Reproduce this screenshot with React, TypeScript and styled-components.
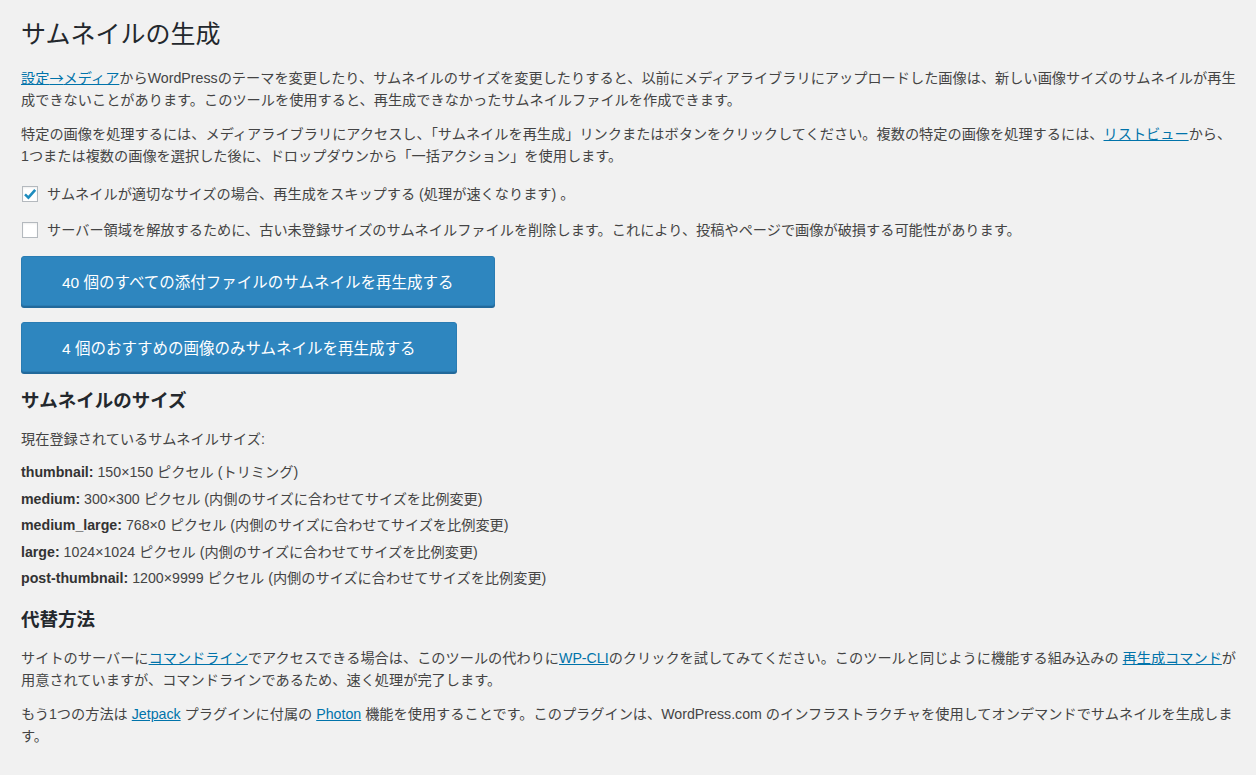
import React from 'react';
import styled, { createGlobalStyle } from 'styled-components';

const GlobalStyle = createGlobalStyle`
  html, body {
    margin: 0;
    padding: 0;
    background: #f1f1f1;
  }
  body {
    font-family: "Liberation Sans", "Noto Sans CJK JP", sans-serif;
    font-size: 14.2px;
    color: #444;
  }
`;

const Wrap = styled.div`
  padding: 18px 8px 40px 21px;
  display: flex;
  flex-direction: column;
  align-items: flex-start;
`;

const Title = styled.h1`
  margin: 0 0 16px;
  font-size: 25px;
  font-weight: 400;
  line-height: 32px;
  color: #23282d;
`;

const Para = styled.p<{ gap?: number }>`
  margin: 0 0 ${p => (p.gap ?? 12)}px;
  line-height: 22px;
`;

const Link = styled.a`
  color: #0073aa;
  text-decoration: underline;
`;

const Arrow = styled.span`
  font-family: "Noto Sans CJK JP", sans-serif;
`;

const NoBreak = styled.span`
  white-space: nowrap;
`;

const OptionRow = styled.label`
  display: flex;
  align-items: center;
  gap: 9px;
  height: 24px;
  margin-bottom: 12px;
  line-height: 22px;
  &:first-of-type { margin-top: 3px; }
`;

const Box = styled.span`
  width: 16px;
  height: 16px;
  box-sizing: border-box;
  border: 1px solid #b4b9be;
  background: #fff;
  box-shadow: inset 0 1px 2px rgba(0, 0, 0, 0.07);
  display: flex;
  align-items: center;
  justify-content: center;
  flex-shrink: 0;
  margin-left: 1px;
`;

const HeroButton = styled.button`
  height: 50px;
  padding: 0 40px;
  margin: 2px 0 14px;
  border: 1px solid #2a7cb3;
  border-radius: 3px;
  background: #2e86bf;
  box-shadow: 0 2px 0 #22699b;
  color: #fff;
  font-family: inherit;
  font-size: 15.5px;
  cursor: pointer;
`;

const SectionTitle = styled.h2`
  margin: 2px 0 14px;
  font-size: 18.5px;
  line-height: 26px;
  font-weight: 700;
  color: #23282d;
`;

const SizeList = styled.ul`
  list-style: none;
  margin: 0 0 16px;
  padding: 0;
  display: flex;
  flex-direction: column;
  gap: 4.5px;
`;

const SizeItem = styled.li`
  line-height: 22px;
  strong { font-weight: 700; color: #333; }
`;

const Check = () => (
  <svg width="14" height="14" viewBox="0 0 14 14">
    <path d="M2 7.4 L5.4 10.6 L12.2 2.8" fill="none" stroke="#1e8cbe" strokeWidth="2.6" strokeLinejoin="miter" />
  </svg>
);

const sizes = [
  ['thumbnail', '150×150 ピクセル (トリミング)'],
  ['medium', '300×300 ピクセル (内側のサイズに合わせてサイズを比例変更)'],
  ['medium_large', '768×0 ピクセル (内側のサイズに合わせてサイズを比例変更)'],
  ['large', '1024×1024 ピクセル (内側のサイズに合わせてサイズを比例変更)'],
  ['post-thumbnail', '1200×9999 ピクセル (内側のサイズに合わせてサイズを比例変更)'],
];

export default function App() {
  return (
    <>
      <GlobalStyle />
      <Wrap>
        <Title>サムネイルの生成</Title>
        <Para>
          <Link href="#">設定<Arrow>→</Arrow>メディア</Link>からWordPressのテーマを変更したり、サムネイルのサイズを変更したりすると、以前にメディアライブラリにアップロードした画像は、新しい画像サイズのサムネイルが再生成できないことがあります。このツールを使用すると、再生成できなかったサムネイルファイルを作成できます。
        </Para>
        <Para gap={12}>
          特定の画像を処理するには、メディアライブラリにアクセスし、「サムネイルを再生成」リンクまたはボタンをクリックしてください。複数の特定の画像を処理するには、<Link href="#">リストビュー</Link>から、<NoBreak>1つ</NoBreak>または複数の画像を選択した後に、ドロップダウンから「一括アクション」を使用します。
        </Para>
        <OptionRow>
          <Box><Check /></Box>
          サムネイルが適切なサイズの場合、再生成をスキップする (処理が速くなります) 。
        </OptionRow>
        <OptionRow>
          <Box />
          サーバー領域を解放するために、古い未登録サイズのサムネイルファイルを削除します。これにより、投稿やページで画像が破損する可能性があります。
        </OptionRow>
        <HeroButton>40 個のすべての添付ファイルのサムネイルを再生成する</HeroButton>
        <HeroButton>4 個のおすすめの画像のみサムネイルを再生成する</HeroButton>
        <SectionTitle>サムネイルのサイズ</SectionTitle>
        <Para gap={11}>現在登録されているサムネイルサイズ:</Para>
        <SizeList>
          {sizes.map(([name, desc]) => (
            <SizeItem key={name}>
              <strong>{name}:</strong> {desc}
            </SizeItem>
          ))}
        </SizeList>
        <SectionTitle>代替方法</SectionTitle>
        <Para>
          サイトのサーバーに<Link href="#">コマンドライン</Link>でアクセスできる場合は、このツールの代わりに<Link href="#">WP-CLI</Link>のクリックを試してみてください。このツールと同じように機能する組み込みの <Link href="#">再生成コマンド</Link>が用意されていますが、コマンドラインであるため、速く処理が完了します。
        </Para>
        <Para>
          もう1つの方法は <Link href="#">Jetpack</Link> プラグインに付属の <Link href="#">Photon</Link> 機能を使用することです。このプラグインは、WordPress.com のインフラストラクチャを使用してオンデマンドでサムネイルを生成します。
        </Para>
      </Wrap>
    </>
  );
}
